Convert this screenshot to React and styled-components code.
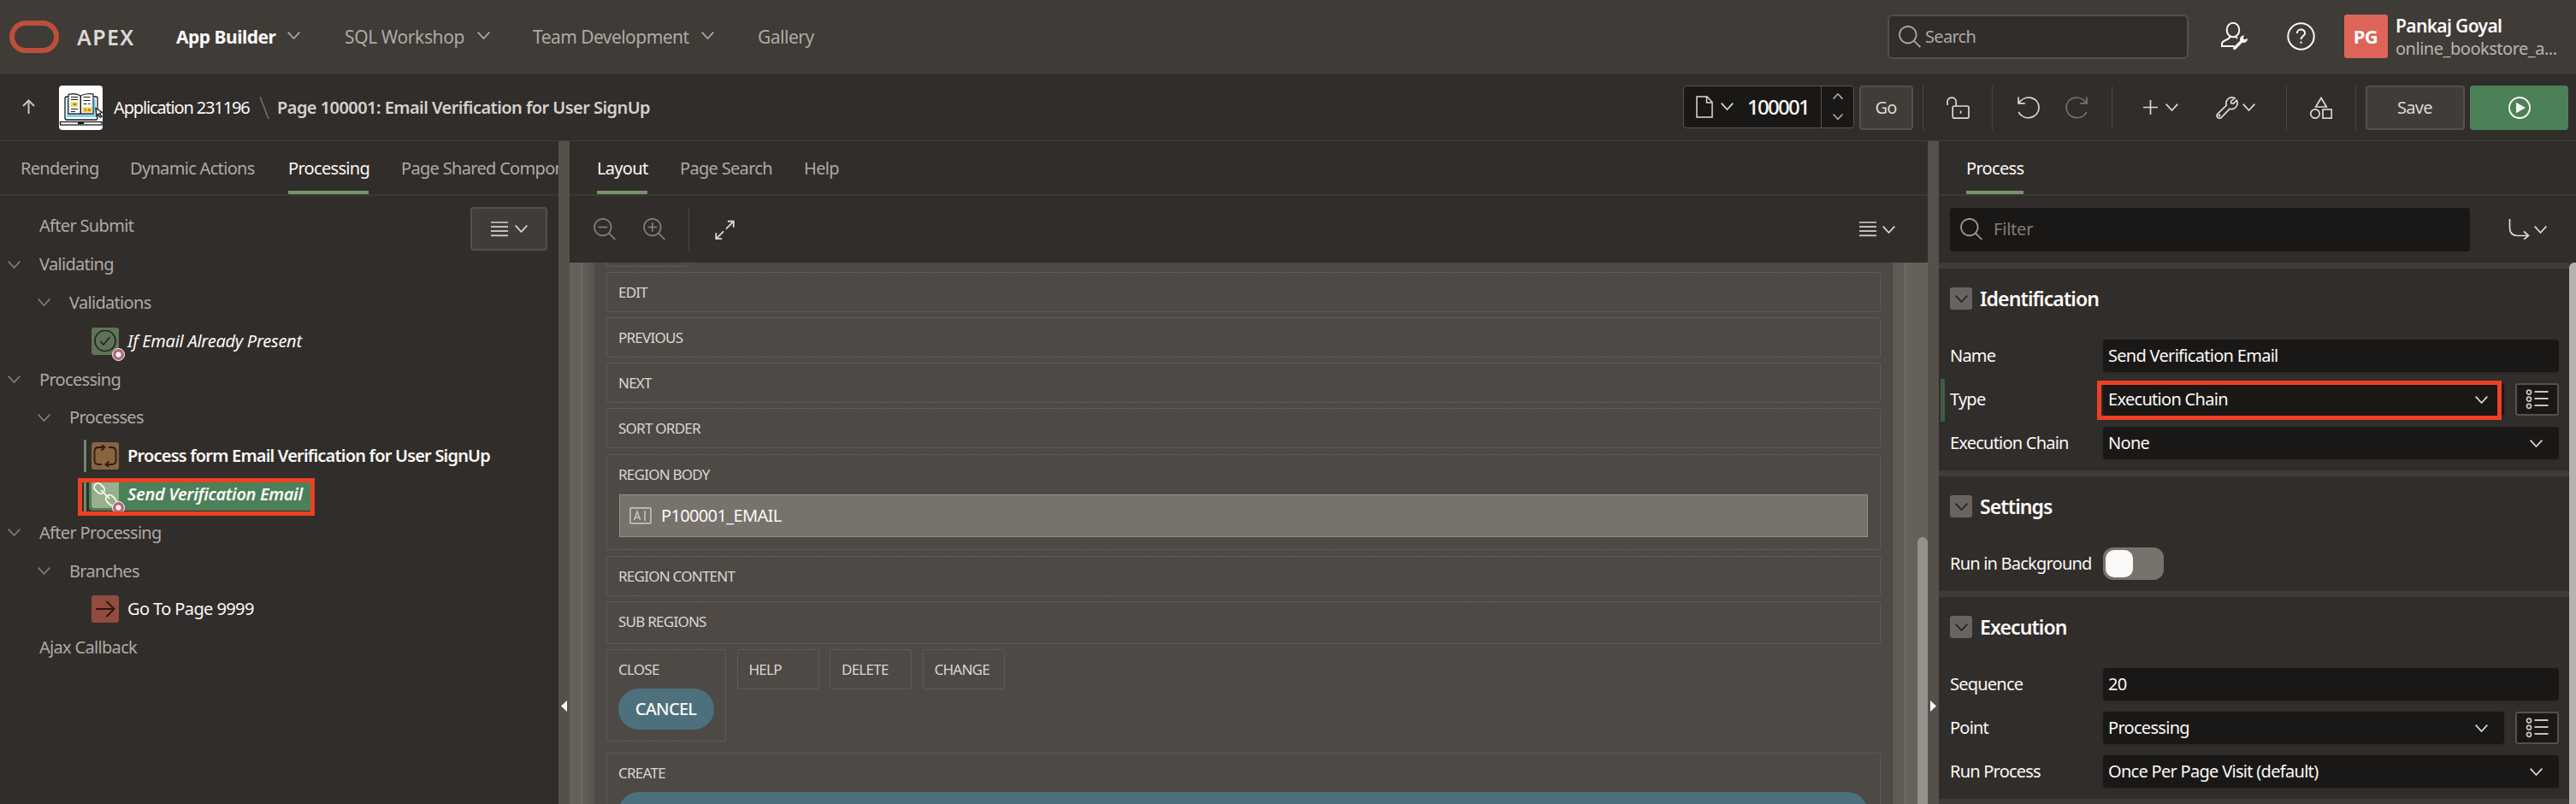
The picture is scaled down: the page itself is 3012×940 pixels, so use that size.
import React from "react";
import styled, { createGlobalStyle, css } from "styled-components";

const c = {
  header: "#3f3b36",
  bg: "#312d2a",
  line: "#403c38",
  split: "#56504b",
  field: "#1a1816",
  border: "#58534d",
  green: "#75956a",
  action: "#4c8059",
  red: "#ec4024",
  text: "#fbf9f8",
  soft: "#dcd9d6",
  muted: "#aeaaa6",
  dim: "#827d78",
};

const Global = createGlobalStyle`
  * { box-sizing: border-box; }
  body { margin: 0; background: ${c.bg}; overflow: hidden; }
  body, button, input { font-family: "Noto Sans", "Open Sans", sans-serif; }
`;

const Page = styled.div`
  display: flex;
  flex-direction: column;
  width: 3012px;
  height: 940px;
  overflow: hidden;
  background: ${c.bg};
  color: ${c.text};
  font-size: 20px;
  letter-spacing: -0.68px;
  white-space: nowrap;
`;

const Text = styled.span`
  flex: none;
  margin-left: -1px;
  color: ${(p) => p.$color || "inherit"};
  font-size: ${(p) => p.$size || 20}px;
  font-weight: ${(p) => p.$weight || 400};
  letter-spacing: ${(p) => (p.$ls === undefined ? -0.68 : p.$ls)}px;
  line-height: 1.3;
  padding-top: ${(p) => p.$pt || 0}px;
`;

/* ---------- icons ---------- */

const Svg = styled.svg`
  display: block;
  flex: none;
  fill: none;
  stroke: currentColor;
  stroke-width: ${(p) => p.$sw || 1.7};
  color: ${(p) => p.$color || c.soft};
  margin: ${(p) => p.$m || "0"};
`;

const Icon = ({ w, h = w, vw = w, vh = h, sw, color, m, children }) => (
  <Svg width={w} height={h} viewBox={`0 0 ${vw} ${vh}`} $sw={sw} $color={color} $m={m}>
    {children}
  </Svg>
);

const Chevron = ({ color, m, sw = 1.7, w = 15, up }) => (
  <Icon w={w} h={w * 0.6} vw={15} vh={9} color={color} m={m} sw={sw}>
    <path d={up ? "M.7 8.3 7.5 1l6.8 7.3" : "M.7.7 7.5 8l6.8-7.3"} />
  </Icon>
);

const SearchIcon = ({ color = c.muted, m, sign }) => (
  <Icon w={26} color={color} m={m}>
    <circle cx="10.8" cy="10.6" r="9.8" />
    <path d="M17.8 17.6 25.4 25.2" />
    {sign && <path d={sign === "plus" ? "M5.5 10.6h10.6M10.8 5.3v10.6" : "M5.5 10.6h10.6"} />}
  </Icon>
);

const Lines = ({ m, w = 20 }) => (
  <Icon w={w} h={18} vw={20} m={m} sw={1.7} color="#d4d1ce">
    <path d="M0 1h20M0 6.2h20M0 11.2h20M0 16.4h20" />
  </Icon>
);

const AppPicture = () => (
  <Icon w={51} h={52} sw={1.3}>
    <rect x="0" y="0" width="51" height="52" rx="4" fill="#fff" stroke="none" />
    <rect x="7" y="13" width="38" height="27" rx="2" fill="#fff" stroke="#16181a" />
    <rect x="9" y="16" width="34" height="21" fill="#8bd0f0" stroke="none" />
    <path d="M11 10.5q8-2 14 1.5 6-3.500 15-2v23H11z" fill="#fff" stroke="#34383c" strokeWidth="1.300" />
    <path d="M25.300 12v21" stroke="#16181a" strokeWidth="1.500" />
    <path d="M14 13.500h8M14 16.500h8M14 27.500h8M14 30.500h5M28.500 13.500h8M28.500 17.500h8M28.500 21.500h4M34 21.500h2.500" stroke="#16181a" strokeWidth="1.200" />
    <path d="M14 19.500h8v5h-8zM27.500 25.500h11v6h-11z" fill="#f3cb4d" stroke="none" />
    <path d="M17 22h3M30 28.500h2M34 28.500h3" stroke="#7b681f" />
    <path d="M43 26.500l7.500 5-3.300 1 2.800 3.800-1.800 1-2.500-3.800-1.700 2.500z" fill="#fff" stroke="#16181a" />
    <rect x="1.500" y="42.500" width="48.500" height="3.500" fill="#fff" stroke="#16181a" />
    <path d="M22 44h7" stroke="#16181a" strokeWidth="2.200" />
  </Icon>
);

const UserWrench = ({ m }) => (
  <Icon w={33} h={33} color={c.text} m={m} sw={2}>
    <ellipse cx="14" cy="9" rx="7.300" ry="8.200" />
    <path d="M10.300 16c0 2.500-.8 3.200-3.300 4.200C3 22 1 22.500 1 25.500V28h14.500M17.500 16c0 1.300.5 2.200 1.500 2.800" />
    <path
      d="M30.800 19l-3.300 1.200-1.700-1.600 1.300-3.200c-3.400-.3-6 2.800-4.800 6.100L14.500 29.300c-1.500 2 .8 3.900 2.500 2.500l7.800-8c3.600 1 6.600-1.600 6-4.800z"
      fill="currentColor"
      stroke="none"
    />
  </Icon>
);

const HelpIcon = ({ m }) => (
  <Icon w={33} color={c.text} m={m} sw={2}>
    <circle cx="16.500" cy="16.500" r="15.200" />
    <path d="M11.800 13c0-6 9.300-5.700 9.300-.3 0 3.300-4.600 3.300-4.600 7.300" />
    <path d="M16.500 22.500v2.300" />
  </Icon>
);

const DocIcon = () => (
  <Icon w={20} h={26} color={c.soft} sw={1.500}>
    <path d="M1 1h12l6 6.500V25H1zM12.500 1v7H19" />
  </Icon>
);

const LockIcon = ({ m }) => (
  <Icon w={27} h={26} m={m}>
    <path d="M1 10V6C1 -0.500 11.200 -0.500 11.200 6v5" />
    <rect x="7.200" y="11" width="18.800" height="14.200" rx="2" />
    <path d="M16.600 16.500v3.200" />
  </Icon>
);

const UndoIcon = ({ m, flip, color }) => (
  <Icon w={26} m={m} color={color}>
    <g transform={flip ? "translate(26 0) scale(-1 1)" : undefined}>
      <path d="M1 0.500v7.300h7.800" />
      <path d="M1.500 7.500C9 -3.500 25 0.500 25 13c0 12-17.500 16.500-23.800 5" />
    </g>
  </Icon>
);

const PlusIcon = ({ m }) => (
  <Icon w={17} m={m}>
    <path d="M0 8.500h17M8.500 0v17" />
  </Icon>
);

const WrenchIcon = ({ m }) => (
  <Icon w={26} m={m}>
    <path d="M22 1.800C16.300-1.200 10.300 4 12.300 10L1.800 20.300c-2.400 2.900 1.400 6.600 4.300 4.200L16 14.300c6.200 1.800 11-4.500 8.300-10L20.500 8.200 17.800 7.800 17.600 5.400z" />
    <circle cx="4" cy="22" r=".6" />
  </Icon>
);

const ShapesIcon = ({ m }) => (
  <Icon w={26} m={m}>
    <path d="M13 1.500 19.300 12H6.700z" />
    <circle cx="6" cy="20" r="5.200" />
    <rect x="15" y="15" width="10.300" height="10.200" />
  </Icon>
);

const PlayIcon = () => (
  <Icon w={26} color={c.text} sw={1.900}>
    <circle cx="13" cy="13" r="12" />
    <path d="M9 6.800 20 13 9 19.200z" fill="currentColor" stroke="none" />
  </Icon>
);

const ExpandIcon = ({ m }) => (
  <Icon w={23} vw={24} m={m} sw={1.900}>
    <path d="M13.500 10.500 22.500 1.500M15.500 1.300h7.200v7.200M10.500 13.500 1.500 22.500M1.300 15.500v7.200h7.200" />
  </Icon>
);

const GotoIcon = () => (
  <Icon w={25} h={24} sw={1.700}>
    <path d="M1.500 0v10c0 7 3 9.500 9 9.500h12.500M18 14.500l5.500 5-5.500 4.500" />
  </Icon>
);

const ListIcon = () => (
  <Icon w={27} h={24} color="#c6c3bf" sw={1.800}>
    <circle cx="4" cy="3.600" r="2.500" />
    <circle cx="4" cy="11.700" r="2.500" />
    <circle cx="4" cy="19.800" r="2.500" />
    <path d="M10.500 3h16M10.500 11h16M10.500 19h16" />
  </Icon>
);

const TextFieldIcon = () => (
  <Icon w={26} h={20} color="#c4c0bc" sw={1.600}>
    <rect x=".9" y=".9" width="24" height="18" rx="1" />
    <path d="M5.500 15 9 5l3.500 10M6.800 12h4.500M18 4v12" />
  </Icon>
);

/* ---------- top bar ---------- */

const TopBar = styled.header`
  display: flex;
  align-items: center;
  height: 87px;
  padding: 0 9px 1px 11px;
  background: ${c.header};
  border-bottom: 1px solid #383430;
  letter-spacing: -0.5px;
`;
const Logo = styled.div`
  width: 58px;
  height: 38px;
  border: 6px solid #bc4f3c;
  border-radius: 19px;
  margin-right: 22px;
`;
const NavItem = styled.div`
  display: flex;
  align-items: center;
  width: ${(p) => p.$w}px;
`;
const Spacer = styled.div`
  flex: 1;
`;
const SearchBox = styled.div`
  display: flex;
  align-items: center;
  width: 352px;
  height: 52px;
  padding-left: 11px;
  background: ${c.bg};
  border: 2px solid #554f4a;
  border-radius: 6px;
`;
const Avatar = styled.div`
  display: flex;
  align-items: center;
  justify-content: center;
  width: 51px;
  height: 51px;
  border-radius: 3px;
  background: #dc6459;
  margin-right: 10px;
`;
const UserInfo = styled.div`
  display: flex;
  flex-direction: column;
  width: 201px;
  padding-top: 2px;
`;

/* ---------- toolbar ---------- */

const Toolbar = styled.div`
  display: flex;
  align-items: center;
  height: 78px;
  padding: 0 9px 0 26px;
  border-bottom: 1px solid ${c.line};
`;
const Divider = styled.div`
  flex: none;
  width: 1px;
  height: 52px;
  background: #4a4641;
  margin: ${(p) => p.$m || "0"};
`;
const PageField = styled.div`
  display: flex;
  align-items: center;
  width: 200px;
  height: 50px;
  margin: 0 6px 2px 0;
  padding-left: 14px;
  background: ${c.field};
  border: 1px solid ${c.border};
  border-radius: 4px;
`;
const Stepper = styled.div`
  display: flex;
  flex-direction: column;
  align-items: center;
  justify-content: center;
  gap: 16px;
  width: 38px;
  height: 100%;
  margin-left: auto;
  border-left: 1px solid ${c.border};
`;
const Button = styled.button`
  display: flex;
  align-items: center;
  justify-content: center;
  flex: none;
  width: ${(p) => p.$w}px;
  height: ${(p) => p.$h || 52}px;
  padding: 0;
  margin: ${(p) => p.$m || "0"};
  color: ${c.soft};
  background: ${(p) => (p.$primary ? c.action : "#403c37")};
  border: 2px solid ${(p) => (p.$primary ? c.action : "#55504b")};
  border-radius: 4px;
`;

/* ---------- panels ---------- */

const Body = styled.main`
  display: flex;
  flex: 1;
  min-height: 0;
`;
const Panel = styled.section`
  display: flex;
  flex-direction: column;
  flex: none;
  width: ${(p) => p.$w}px;
  overflow: hidden;
`;
const Splitter = styled.div`
  display: flex;
  justify-content: center;
  align-items: flex-start;
  flex: none;
  width: 13px;
  padding-top: 654px;
  background: ${c.split};
`;
const TabBar = styled.nav`
  display: flex;
  flex: none;
  height: 64px;
  padding-left: ${(p) => p.$pl}px;
  border-bottom: 2px solid #3c3834;
  overflow: hidden;
`;
const Tab = styled.div`
  display: flex;
  align-items: center;
  flex: none;
  height: 63px;
  padding: 6px 0 0 1px;
  width: ${(p) => p.$w}px;
  margin-right: ${(p) => p.$gap || 38}px;
  color: ${(p) => (p.$active ? c.text : c.muted)};
  border-bottom: 5px solid ${(p) => (p.$active ? c.green : "transparent")};
`;

/* ---------- tree ---------- */

const TreeArea = styled.div`
  display: flex;
  align-items: flex-start;
  justify-content: space-between;
  padding: 13px 13px 0 0;
`;
const Tree = styled.div`
  display: flex;
  flex-direction: column;
  width: 550px;
`;
const TreeRow = styled.div`
  display: flex;
  align-items: center;
  height: 44.8px;
  padding-left: ${(p) => [9, 44, 98][p.$level]}px;
  color: ${(p) => (p.$level === 2 ? c.text : c.muted)};
`;
const Toggle = styled.div`
  width: 38px;
`;
const Change = styled.div`
  flex: none;
  width: 3px;
  height: 38px;
  margin-right: ${(p) => p.$gap || 6}px;
  border-radius: 1px;
  background: ${(p) => (p.$on ? "#6d8a64" : "transparent")};
`;
const NodeIcon = styled.div`
  position: relative;
  display: flex;
  align-items: center;
  justify-content: center;
  flex: none;
  width: 32px;
  height: 32px;
  margin-right: 11px;
  border-radius: 3px;
  background: ${(p) => p.$bg};
`;
const Badge = styled.div`
  position: absolute;
  left: 24px;
  top: 24px;
  width: 15px;
  height: 15px;
  border-radius: 50%;
  border: 1.5px solid #fff;
  background: radial-gradient(circle, #fff 0 2.800px, #b1677b 3.300px);
`;
const Selected = styled.div`
  display: flex;
  align-items: center;
  flex: none;
  height: 44px;
  width: 277px;
  margin: 0 0 -6px -7px;
  border: 5px solid ${c.red};
  padding-left: 2px;
  overflow: hidden;
`;
const SelectedFill = styled.div`
  display: flex;
  align-items: center;
  flex: 1;
  height: 33px;
  margin-bottom: 1px;
  padding: 0 0 5px 3px;
  background: ${c.action};
  border-radius: 0 0 0 4px;
`;

/* ---------- layout canvas ---------- */

const SubBar = styled.div`
  display: flex;
  align-items: center;
  flex: none;
  height: 78px;
  padding: 0 38px 0 28px;
`;
const Canvas = styled.div`
  display: flex;
  flex: 1;
  min-height: 0;
  background: #66605b;
`;
const Gutter = styled.div`
  flex: none;
  width: 15px;
  ${(p) =>
    p.$right
      ? css`
          border-right: 1px solid #7b7570;
          background: linear-gradient(90deg, #5d5853, #625c57);
        `
      : css`
          border-left: 1px solid #7b7570;
          margin-left: 14px;
          background: linear-gradient(90deg, #645e59, #57524d);
        `}
`;
const CanvasBody = styled.div`
  display: flex;
  flex-direction: column;
  flex: none;
  width: 1518px;
  padding: 0 14px;
  background: #4e4945;
  overflow: hidden;
`;
const Region = styled.div`
  flex: none;
  width: ${(p) => (p.$w ? p.$w + "px" : "auto")};
  height: ${(p) => p.$h || 47}px;
  margin-bottom: ${(p) => (p.$mb === undefined ? 6 : p.$mb)}px;
  padding: 0 13px;
  border: 1px dotted #726c67;
  border-radius: 3px;
`;
const RegionTail = styled(Region)`
  border-top: none;
  border-radius: 0 0 3px 3px;
`;
const RegionName = styled.div`
  display: flex;
  align-items: center;
  height: 45px;
  color: #dad7d4;
  font-size: 17px;
  font-weight: 450;
  letter-spacing: -0.75px;
`;
const ButtonRow = styled.div`
  display: flex;
  align-items: flex-start;
  gap: 12.500px;
  margin-bottom: 13px;
`;
const ItemBox = styled.div`
  display: flex;
  align-items: center;
  gap: 12px;
  height: 50px;
  margin: 1px 1px 0 1px;
  padding-left: 11px;
  background: #78726d;
  border: 1px solid #948e89;
`;
const Pill = styled.div`
  display: flex;
  align-items: center;
  justify-content: center;
  width: ${(p) => p.$w || 112}px;
  height: 48px;
  border-radius: 24px;
  background: #4d717c;
`;
const CanvasThumb = styled.div`
  width: 12px;
  margin: 321px 0 -20px auto;
  border-radius: 6px;
  background: #95908b;
`;

/* ---------- property editor ---------- */

const FilterBar = styled.div`
  display: flex;
  align-items: center;
  flex: none;
  height: 78px;
  padding-left: 13px;
`;
const FilterInput = styled.div`
  display: flex;
  align-items: center;
  width: 608px;
  height: 51px;
  margin-right: 45px;
  padding-left: 12px;
  background: ${c.field};
  border-radius: 4px;
`;
const Editor = styled.div`
  display: flex;
  flex: 1;
  min-height: 0;
`;
const Groups = styled.div`
  flex: none;
  width: 737px;
  overflow: hidden;
`;
const EditorThumb = styled.div`
  flex: 1;
  margin-bottom: -20px;
  border-radius: 6px 0 0 6px;
  background: #b6b2ae;
`;
const Group = styled.div`
  border-top: 7px solid ${c.header};
  padding: 22px 12px 13px 0;
`;
const GroupHead = styled.div`
  display: flex;
  align-items: center;
  height: 26px;
  padding-left: 13px;
  margin-bottom: 35px;
`;
const Collapse = styled.div`
  display: flex;
  align-items: center;
  justify-content: center;
  width: 26px;
  height: 26px;
  margin-right: 10px;
  border-radius: 3px;
  background: #69645f;
`;
const Property = styled.div`
  position: relative;
  display: flex;
  align-items: center;
  height: 38px;
  padding-left: 13px;
  & + & {
    margin-top: 13px;
  }
`;
const PropLabel = styled.div`
  display: flex;
  flex: none;
  width: 179px;
  padding-left: 1px;
`;
const Field = styled.div`
  display: flex;
  align-items: center;
  justify-content: space-between;
  flex: 1;
  height: 38px;
  padding: 0 19px 0 7px;
  background: ${c.field};
  border-radius: 4px;
  box-shadow: 0 1px 2px rgba(0, 0, 0, 0.15);
`;
const ListButton = styled.div`
  display: flex;
  align-items: center;
  justify-content: center;
  width: 51px;
  height: 38px;
  margin-left: 13px;
  background: ${c.field};
  border: 2px solid #55504b;
  border-radius: 3px;
`;
const Modified = styled.div`
  position: absolute;
  left: 2px;
  top: -5px;
  width: 5px;
  height: 50px;
  background: #3f5b44;
`;
const Highlight = styled.div`
  position: absolute;
  left: 185px;
  top: -3px;
  width: 473px;
  height: 46px;
  border: 5px solid ${c.red};
`;
const Switch = styled.div`
  display: flex;
  align-items: center;
  width: 71px;
  height: 38px;
  padding: 3px;
  border-radius: 12px;
  background: #78726d;
  &::before {
    content: "";
    width: 32px;
    height: 32px;
    border-radius: 10px;
    background: #fbf9f8;
  }
`;

const nav = [
  ["App Builder", 197, 14, true, -0.5],
  ["SQL Workshop", 220, 15, false, -0.4],
  ["Team Development", 263, 15, false, -0.55],
  ["Gallery", 70, 0, false, -0.5],
];

const nodeIcons = {
  check: (
    <Icon w={26} h={26} color="#20261e" sw={1.700}>
      <circle cx="13" cy="12.500" r="12" />
      <path d="M7.500 13 11 17l7.500-9" />
    </Icon>
  ),
  loop: (
    <Icon w={28} h={26} color="#2c1e12" sw={1.800}>
      <path d="M10 23H6.500C3 23 1.500 21 1.500 18V8c0-3.500 1.500-5 5-5H13M9.500-.5 13.500 3l-4 3.700M18 3h3.500c3.500 0 5 1.500 5 5v10c0 3.500-1.500 5-5 5H15M18.500 19.300 14.500 23l4 3.500" />
    </Icon>
  ),
  chain: (
    <Icon w={28} h={28} color="#f4f7f2" sw={1.900}>
      <g transform="rotate(45 14 14)">
        <rect x="-2.500" y="9.500" width="13.500" height="9" rx="4.500" />
        <rect x="17" y="9.500" width="13.500" height="9" rx="4.500" />
        <path d="M7 14h14" />
      </g>
    </Icon>
  ),
  arrow: (
    <Icon w={24} h={20} color="#2a1512" sw={1.900}>
      <path d="M1 10h21.500M13.500 1 22.500 10l-9 9" />
    </Icon>
  ),
};

const tree = [
  { t: "After Submit", level: 0, leaf: true },
  { t: "Validating", level: 0 },
  { t: "Validations", level: 1 },
  { t: "If Email Already Present", level: 2, icon: "check", bg: "#607358", badge: true, italic: true, ls: -0.25 },
  { t: "Processing", level: 0 },
  { t: "Processes", level: 1 },
  { t: "Process form Email Verification for User SignUp", level: 2, icon: "loop", bg: "#8a6341", changed: true, bold: true, ls: -0.8 },
  { t: "Send Verification Email", level: 2, icon: "chain", bg: "#98b08c", badge: true, selected: true, changed: true, bold: true, italic: true, ls: -0.36 },
  { t: "After Processing", level: 0 },
  { t: "Branches", level: 1 },
  { t: "Go To Page 9999", level: 2, icon: "arrow", bg: "#924b3f", ls: -0.6 },
  { t: "Ajax Callback", level: 0, leaf: true },
];

const Italic = styled(Text)`
  font-style: italic;
`;

function NodeLabel({ n }) {
  const Tag = n.italic ? Italic : Text;
  return (
    <Tag $weight={n.bold ? 600 : n.level === 2 ? 450 : 400} $ls={n.ls}>
      {n.t}
    </Tag>
  );
}

function TreeNode({ n }) {
  const icon = n.icon && (
    <NodeIcon $bg={n.bg}>
      {nodeIcons[n.icon]}
      {n.badge && <Badge />}
    </NodeIcon>
  );
  if (n.selected)
    return (
      <TreeRow $level={2}>
        <Selected>
          <Change $on $gap={3} />
          <SelectedFill>
            {icon}
            <NodeLabel n={n} />
          </SelectedFill>
        </Selected>
      </TreeRow>
    );
  return (
    <TreeRow $level={n.level}>
      {n.level < 2 && <Toggle>{!n.leaf && <Chevron color={c.dim} />}</Toggle>}
      {n.level === 2 && <Change $on={n.changed} />}
      {icon}
      <NodeLabel n={n} />
    </TreeRow>
  );
}

function Prop({ label, value, select, list, modified, highlight, toggle }) {
  return (
    <Property>
      {modified && <Modified />}
      <PropLabel>
        <Text $weight={450} $ls={-0.78}>
          {label}
        </Text>
      </PropLabel>
      {toggle ? (
        <Switch />
      ) : (
        <Field>
          <Text $weight={450} $ls={-0.7}>
            {value}
          </Text>
          {select && <Chevron />}
        </Field>
      )}
      {list && (
        <ListButton>
          <ListIcon />
        </ListButton>
      )}
      {highlight && <Highlight />}
    </Property>
  );
}

function PropGroup({ title, children }) {
  return (
    <Group>
      <GroupHead>
        <Collapse>
          <Chevron color="#24211f" />
        </Collapse>
        <Text $size={23} $weight={600} $ls={-0.9} $pt={2}>
          {title}
        </Text>
      </GroupHead>
      {children}
    </Group>
  );
}

export default function App() {
  return (
    <Page>
      <Global />
      <TopBar>
        <Logo />
        <NavItem $w={116}>
          <Text $size={25} $weight={600} $ls={1.4} $color={c.soft} $pt={1}>
            APEX
          </Text>
        </NavItem>
        {nav.map(([t, w, gap, active, ls]) => (
          <NavItem key={t} $w={w}>
            <Text $size={21} $weight={active ? 700 : 400} $color={active ? c.text : c.muted} $ls={ls} $pt={2}>
              {t}
            </Text>
            {gap > 0 && <Chevron color={c.muted} m={`0 0 1px ${gap}px`} />}
          </NavItem>
        ))}
        <Spacer />
        <SearchBox>
          <SearchIcon m="0 6px 0 0" />
          <Text $color={c.muted} $pt={1}>
            Search
          </Text>
        </SearchBox>
        <UserWrench m="0 44px 0 38px" />
        <HelpIcon m="0 34px 0 0" />
        <Avatar>
          <Text $size={22} $weight={700} $ls={-0.5}>
            PG
          </Text>
        </Avatar>
        <UserInfo>
          <Text $size={21} $weight={600} $ls={-0.65}>
            Pankaj Goyal
          </Text>
          <Text $color="#b9b5b1" $ls={-0.48}>
            online_bookstore_a...
          </Text>
        </UserInfo>
      </TopBar>

      <Toolbar>
        <Icon w={15} h={17} m="0 28px 2px 0" color="#c6c3bf" sw={2}>
          <path d="M7.500 17V1.500M1 8 7.500 1.500 14 8" />
        </Icon>
        <AppPicture />
        <NavItem $w={170}>
          <Icon w={14} h={1} color="transparent" />
          <Text $weight={450} $ls={-1.15}>
            Application 231196
          </Text>
        </NavItem>
        <Icon w={12} h={26} m="0 10px 0 13px" color="#77726d" sw={1.500}>
          <path d="M1 0 11 26" />
        </Icon>
        <Text $weight={600} $color="#d4d1ce" $ls={-0.55}>
          Page 100001: Email Verification for User SignUp
        </Text>
        <Spacer />
        <PageField>
          <DocIcon />
          <Chevron m="0 17px 0 9px" />
          <Text $size={24} $weight={500} $ls={-1.75}>
            100001
          </Text>
          <Stepper>
            <Chevron w={12} up color={c.muted} sw={2} />
            <Chevron w={12} color={c.muted} sw={2} />
          </Stepper>
        </PageField>
        <Button $w={63}>
          <Text $ls={-0.8} $weight={450}>
            Go
          </Text>
        </Button>
        <Divider $m="0 27px 0 11px" />
        <LockIcon />
        <Divider $m="0 29px 0 26px" />
        <UndoIcon />
        <UndoIcon flip color="#77726d" m="0 0 0 30px" />
        <Divider $m="0 36px 0 28px" />
        <PlusIcon />
        <Chevron m="0 44px 0 9px" />
        <WrenchIcon />
        <Chevron m="0 36px 0 5px" />
        <Divider $m="0 27px 0 0" />
        <ShapesIcon />
        <Divider $m="0 11px 0 27px" />
        <Button $w={116} $m="0 6px 0 0">
          <Text $weight={450}>Save</Text>
        </Button>
        <Button $w={115} $primary>
          <PlayIcon />
        </Button>
      </Toolbar>

      <Body>
        <Panel $w={653}>
          <TabBar $pl={24}>
            <Tab $w={90}>
              <Text>Rendering</Text>
            </Tab>
            <Tab $w={147}>
              <Text>Dynamic Actions</Text>
            </Tab>
            <Tab $w={94} $active>
              <Text $weight={450}>Processing</Text>
            </Tab>
            <Tab $w={240}>
              <Text>Page Shared Components</Text>
            </Tab>
          </TabBar>
          <TreeArea>
            <Tree>
              {tree.map((n) => (
                <TreeNode key={n.t} n={n} />
              ))}
            </Tree>
            <Button $w={90} $h={51}>
              <Lines m="0 8px 0 0" />
              <Chevron />
            </Button>
          </TreeArea>
        </Panel>

        <Splitter>
          <Icon w={7} h={13} color={c.text}>
            <path d="M7 0v13L0 6.500z" fill="currentColor" stroke="none" />
          </Icon>
        </Splitter>

        <Panel $w={1588}>
          <TabBar $pl={32}>
            <Tab $w={59} $active>
              <Text $weight={450}>Layout</Text>
            </Tab>
            <Tab $w={107}>
              <Text>Page Search</Text>
            </Tab>
            <Tab $w={60}>
              <Text>Help</Text>
            </Tab>
          </TabBar>
          <SubBar>
            <SearchIcon sign="minus" color={c.dim} />
            <SearchIcon sign="plus" color={c.dim} m="0 27px 0 32px" />
            <Divider $m="0 30px 0 0" />
            <ExpandIcon />
            <Spacer />
            <Lines m="0 7px 0 0" />
            <Chevron />
          </SubBar>
          <Canvas>
            <Gutter />
            <CanvasBody>
              <RegionTail $h={5} $w={96} />
              <Region>
                <RegionName>EDIT</RegionName>
              </Region>
              <Region>
                <RegionName>PREVIOUS</RegionName>
              </Region>
              <Region>
                <RegionName>NEXT</RegionName>
              </Region>
              <Region $mb={7}>
                <RegionName>SORT ORDER</RegionName>
              </Region>
              <Region $h={112} $mb={7}>
                <RegionName>REGION BODY</RegionName>
                <ItemBox>
                  <TextFieldIcon />
                  <Text $weight={450} $ls={-0.65}>
                    P100001_EMAIL
                  </Text>
                </ItemBox>
              </Region>
              <Region>
                <RegionName>REGION CONTENT</RegionName>
              </Region>
              <Region $h={50}>
                <RegionName>SUB REGIONS</RegionName>
              </Region>
              <ButtonRow>
                <Region $w={140} $h={108} $mb={0}>
                  <RegionName>CLOSE</RegionName>
                  <Pill>
                    <Text $weight={500} $ls={-0.7}>
                      CANCEL
                    </Text>
                  </Pill>
                </Region>
                <Region $w={96}>
                  <RegionName>HELP</RegionName>
                </Region>
                <Region $w={96}>
                  <RegionName>DELETE</RegionName>
                </Region>
                <Region $w={96}>
                  <RegionName>CHANGE</RegionName>
                </Region>
              </ButtonRow>
              <Region $h={112}>
                <RegionName>CREATE</RegionName>
                <Pill $w={1461} />
              </Region>
            </CanvasBody>
            <Gutter $right />
            <CanvasThumb />
          </Canvas>
        </Panel>

        <Splitter>
          <Icon w={7} h={13} color={c.text}>
            <path d="M0 0v13L7 6.500z" fill="currentColor" stroke="none" />
          </Icon>
        </Splitter>

        <Panel $w={745}>
          <TabBar $pl={32}>
            <Tab $w={67} $active>
              <Text $weight={450}>Process</Text>
            </Tab>
          </TabBar>
          <FilterBar>
            <FilterInput>
              <SearchIcon m="0 14px 0 0" color="#a09b97" />
              <Text $color="#827d78" $ls={-0.2}>
                Filter
              </Text>
            </FilterInput>
            <GotoIcon />
            <Chevron m="0 0 0 5px" />
          </FilterBar>
          <Editor>
            <Groups>
              <PropGroup title="Identification">
                <Prop label="Name" value="Send Verification Email" />
                <Prop label="Type" value="Execution Chain" select list modified highlight />
                <Prop label="Execution Chain" value="None" select />
              </PropGroup>
              <PropGroup title="Settings">
                <Prop label="Run in Background" toggle />
              </PropGroup>
              <PropGroup title="Execution">
                <Prop label="Sequence" value="20" />
                <Prop label="Point" value="Processing" select list />
                <Prop label="Run Process" value="Once Per Page Visit (default)" select />
              </PropGroup>
              <Group />
            </Groups>
            <EditorThumb />
          </Editor>
        </Panel>
      </Body>
    </Page>
  );
}
